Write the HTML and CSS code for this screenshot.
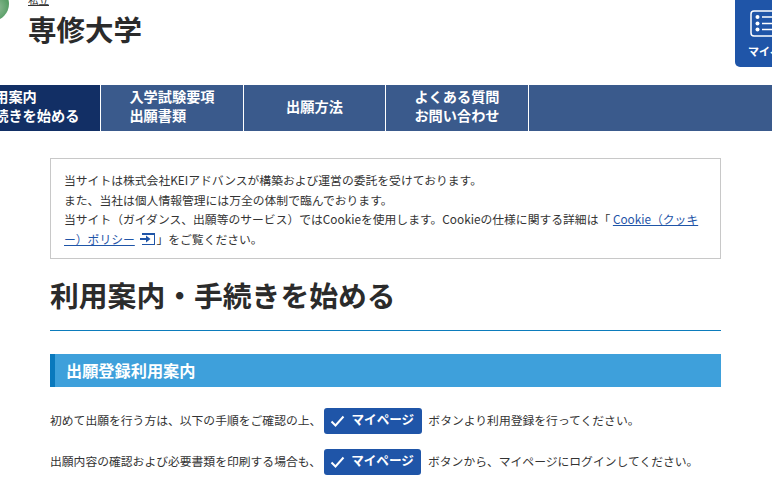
FILE: index.html
```html
<!DOCTYPE html>
<html lang="ja">
<head>
  <meta charset="UTF-8" />
  <title>専修大学</title>
  <link rel="stylesheet" href="styles.css">
</head>
<body>

  <header class="site-header">
    <div class="logo-ball"></div>
    <div class="school">
      <div class="school-type">私立</div>
      <div class="school-name">専修大学</div>
    </div>
    <a class="mypage-tab" href="#">
      <svg class="mypage-icon" width="42" height="28" viewBox="0 0 42 28" fill="none" stroke="#fff">
        <rect x="1" y="1" width="40" height="25" rx="3" stroke-width="1.5" />
        <circle cx="7.500" cy="7" r="2" fill="#fff" stroke="none" />
        <circle cx="7.500" cy="13.500" r="2" fill="#fff" stroke="none" />
        <circle cx="7.500" cy="19.500" r="2" fill="#fff" stroke="none" />
        <path d="M12 7h24M12 13.500h24M12 19.500h24" stroke-width="1.600" />
      </svg>
      <span class="mypage-label">マイページ</span>
    </a>
  </header>

  <nav class="main-nav">
    <a class="nav-item nav-first active" href="#"><span>利用案内<br>手続きを始める</span></a>
    <a class="nav-item nav-second" href="#"><span>入学試験要項<br>出願書類</span></a>
    <a class="nav-item nav-third" href="#">出願方法</a>
    <a class="nav-item nav-fourth" href="#"><span>よくある質問<br>お問い合わせ</span></a>
  </nav>

  <main class="content">
    <div class="notice">
      当サイトは株式会社KEIアドバンスが構築および運営の委託を受けております。<br>
      また、当社は個人情報管理には万全の体制で臨んでおります。<br>
      当サイト（ガイダンス、出願等のサービス）ではCookieを使用します。Cookieの仕様に関する詳細は「 <a href="#">Cookie（クッキー）ポリシー</a>
      <svg class="exit-icon" width="15" height="12" viewBox="0 0 15 12">
        <path d="M2 0h13v12H2v-1h12V2H2z" fill="#1f55a8" />
        <path d="M0 5h6V2.500L10.500 6 6 9.500V7H0z" fill="#1f55a8" />
      </svg>」をご覧ください。
    </div>

    <h1 class="page-title">利用案内・手続きを始める</h1>

    <h2 class="section-title">出願登録利用案内</h2>

    <p class="guide-row">初めて出願を行う方は、以下の手順をご確認の上、
      <span class="btn-mypage">
        <svg width="15" height="12" viewBox="0 0 15 12"><path d="M1.500 6.500l4 4 8-9" fill="none" stroke="#fff" stroke-width="2" /></svg>
        <span class="btn-label">マイページ</span>
      </span>
      ボタンより利用登録を行ってください。</p>
    <p class="guide-row">出願内容の確認および必要書類を印刷する場合も、
      <span class="btn-mypage">
        <svg width="15" height="12" viewBox="0 0 15 12"><path d="M1.500 6.500l4 4 8-9" fill="none" stroke="#fff" stroke-width="2" /></svg>
        <span class="btn-label">マイページ</span>
      </span>
      ボタンから、マイページにログインしてください。</p>
  </main>

</body>
</html>
```

FILE: styles.css
```css
html, body {
  margin: 0;
  height: 484px;
  overflow: hidden;
  background: #fff;
}
body {
  font-family: "Noto Sans CJK JP", "Noto Sans", sans-serif;
  color: #333;
  font-size: 12px;
}
a {
  color: inherit;
  text-decoration: none;
}

/* ヘッダー */
.site-header {
  height: 85px;
  display: flex;
  position: relative;
}
.logo-ball {
  width: 34px;
  height: 34px;
  margin: -13px 0 0 -25px;
  border-radius: 50%;
  background: radial-gradient(circle at 62% 60%, #93bd99, #3f9150 62%, #1f7a35);
}
.school {
  margin: -8px 0 0 19px;
}
.school-type {
  font-size: 10.5px;
  line-height: 16px;
  text-decoration: underline;
}
.school-name {
  font-size: 28.5px;
  font-weight: 700;
  line-height: 36px;
  margin-top: 3px;
  color: #2b2b2b;
}
.mypage-tab {
  position: absolute;
  left: 735px;
  top: -10px;
  width: 90px;
  height: 77px;
  background: #1f55a8;
  border-radius: 0 0 0 5px;
  color: #fff;
  overflow: hidden;
}
.mypage-icon {
  position: absolute;
  left: 15px;
  top: 20px;
}
.mypage-label {
  position: absolute;
  left: 13px;
  top: 53px;
  font-size: 11px;
  font-weight: 700;
  white-space: nowrap;
}

/* グローバルナビ */
.main-nav {
  height: 46px;
  background: #3a5a8c;
  display: flex;
}
.nav-item {
  display: flex;
  align-items: center;
  justify-content: center;
  box-sizing: border-box;
  padding-bottom: 4px;
  border-right: 1px solid #fff;
  color: #fff;
  font-size: 14.2px;
  font-weight: 700;
  line-height: 19px;
}
.nav-first {
  width: 101px;
  justify-content: flex-start;
}
.nav-first span {
  margin-left: -20px;
  white-space: nowrap;
}
.nav-first.active {
  background: #122f65;
}
.nav-second { width: 143px; }
.nav-third { width: 142px; }
.nav-fourth { width: 143px; }

/* 本文 */
.content {
  margin: 27px 51px 0 50px;
}
.notice {
  border: 1px solid #c8c8c8;
  padding: 11px 13px 10px;
  line-height: 19.5px;
  font-size: 11.8px;
  color: #333;
}
.notice a {
  color: #1f55a8;
  text-decoration: underline;
}
.exit-icon {
  vertical-align: -1px;
  margin: 0 1px 0 3px;
}
.page-title {
  margin: 17px 0 0;
  padding-bottom: 16px;
  border-bottom: 1px solid #0c7cbc;
  font-size: 28.8px;
  line-height: 38px;
  font-weight: 700;
  color: #2b2b2b;
}
.section-title {
  margin: 23px 0 0;
  height: 33px;
  line-height: 32px;
  background: #3ea0db;
  border-left: 5px solid #0a79bd;
  padding-left: 11px;
  color: #fff;
  font-size: 16.2px;
  font-weight: 700;
}
.guide-row {
  margin: 21px 0 0;
  height: 25.5px;
  line-height: 23.5px;
  font-size: 11.8px;
  white-space: nowrap;
}
.guide-row + .guide-row {
  margin-top: 15.5px;
}
.btn-mypage {
  display: inline-flex;
  align-items: center;
  gap: 6px;
  height: 25.5px;
  box-sizing: border-box;
  padding: 0 7.5px 0 6.5px;
  margin: 0 4px 0 0;
  background: #1f55a8;
  border-radius: 3px;
  color: #fff;
  font-size: 12.6px;
  font-weight: 700;
  vertical-align: top;
}
.btn-label {
  margin-top: -4px;
}
```
